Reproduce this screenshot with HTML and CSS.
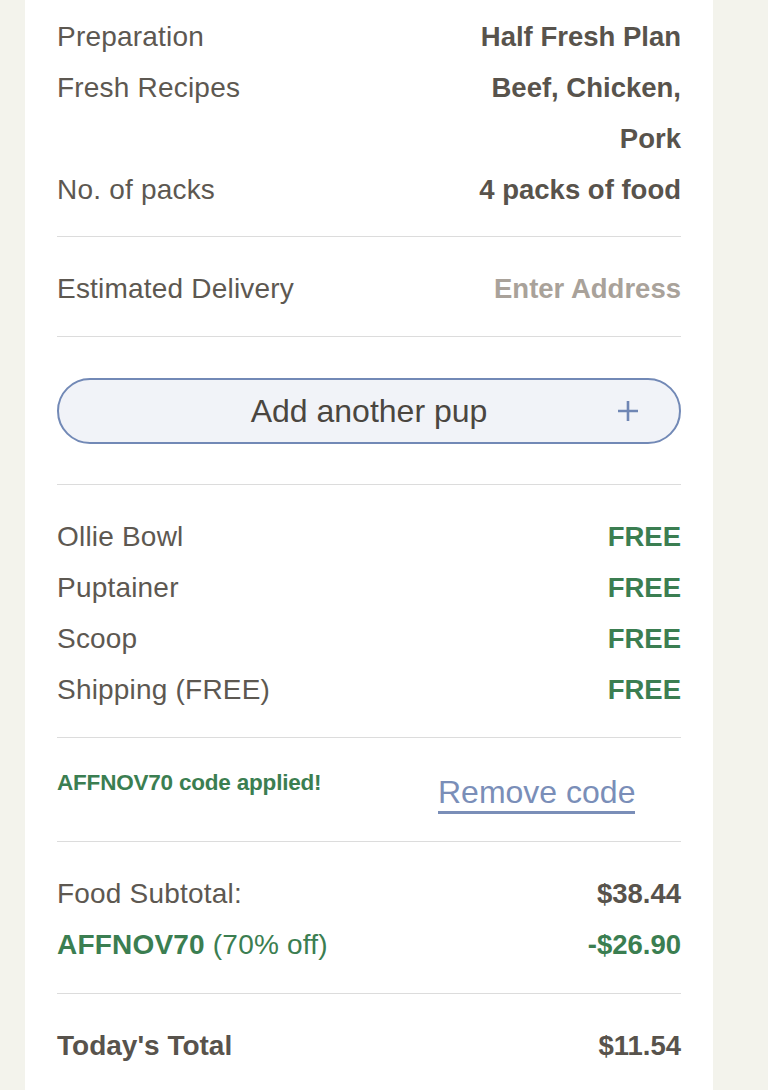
FILE: index.html
```html
<!DOCTYPE html>
<html lang="en">
<head>
<meta charset="utf-8">
<title>Order summary</title>
<link rel="stylesheet" href="styles.css">
</head>
<body>
<main class="card">
  <section class="section first">
    <div class="row"><span class="label">Preparation</span><span class="value">Half Fresh Plan</span></div>
    <div class="row"><span class="label">Fresh Recipes</span><span class="value">Beef, Chicken, Pork</span></div>
    <div class="row"><span class="label">No. of packs</span><span class="value">4 packs of food</span></div>
  </section>
  <section class="section">
    <div class="row"><span class="label">Estimated Delivery</span><span class="value muted">Enter Address</span></div>
  </section>
  <section class="section btn-section">
    <button class="add-pup" type="button">
      <span class="add-text">Add another pup</span>
      <svg class="plus" width="22" height="22" viewBox="0 0 22 22" aria-hidden="true"><path d="M11 1v20M1 11h20" stroke="#6f86b4" stroke-width="2.6" fill="none"/></svg>
    </button>
  </section>
  <section class="section">
    <div class="row"><span class="label">Ollie Bowl</span><span class="value green">FREE</span></div>
    <div class="row"><span class="label">Puptainer</span><span class="value green">FREE</span></div>
    <div class="row"><span class="label">Scoop</span><span class="value green">FREE</span></div>
    <div class="row"><span class="label">Shipping (FREE)</span><span class="value green">FREE</span></div>
  </section>
  <section class="section promo">
    <span class="applied">AFFNOV70 code applied!</span>
    <a class="remove" href="#">Remove code</a>
  </section>
  <section class="section totals">
    <div class="row"><span class="label">Food Subtotal:</span><span class="value">$38.44</span></div>
    <div class="row"><span class="label green"><b>AFFNOV70</b> (70% off)</span><span class="value green">-$26.90</span></div>
  </section>
  <section class="section last">
    <div class="row"><span class="label strong">Today's Total</span><span class="value">$11.54</span></div>
  </section>
</main>
</body>
</html>
```
FILE: styles.css
```css
html, body {
  margin: 0;
  padding: 0;
  background: #f3f3ec;
}
body {
  font-family: "Liberation Sans", Arial, sans-serif;
  color: #5d5851;
}
.card {
  margin-left: 25px;
  width: 688px;
  min-height: 1090px;
  background: #ffffff;
  padding: 11px 32px 0;
  box-sizing: border-box;
}
.section {
  padding: 26px 0 22px;
  border-bottom: 1px solid #dcdcdc;
}
.section.first {
  padding-top: 0;
  padding-bottom: 21px;
}
.section.totals {
  padding-bottom: 23px;
}
.section.last {
  border-bottom: none;
}
.row {
  display: flex;
  justify-content: space-between;
  align-items: flex-start;
  font-size: 28px;
  line-height: 51px;
}
.label {
  font-weight: 400;
  color: #5d5851;
  letter-spacing: 0.2px;
}
.label b {
  font-weight: 700;
}
.label.strong {
  font-weight: 700;
  color: #58534c;
  letter-spacing: 0;
}
.value {
  font-weight: 700;
  font-size: 27.5px;
  color: #58534c;
  text-align: right;
  max-width: 215px;
}
.value.muted {
  color: #a9a29a;
}
.green,
.value.green,
.label.green {
  color: #3b7e51;
}
.btn-section {
  padding-top: 41px;
  padding-bottom: 40px;
}
.add-pup {
  display: grid;
  grid-template-columns: 1fr auto 1fr;
  align-items: center;
  width: 100%;
  height: 66px;
  margin: 0;
  padding: 0 40px 0 0;
  border: 2px solid #7289b6;
  border-radius: 33px;
  background: #f1f3f8;
  font-family: "Liberation Sans", Arial, sans-serif;
  font-size: 32px;
  color: #4a4640;
  box-sizing: border-box;
  cursor: pointer;
}
.add-text {
  grid-column: 2;
  margin-left: 40px;
}
.plus {
  grid-column: 3;
  justify-self: end;
}
.promo {
  display: flex;
  align-items: flex-start;
  padding-bottom: 27px;
}
.applied {
  font-size: 22.5px;
  font-weight: 700;
  line-height: 38px;
  letter-spacing: -0.2px;
  color: #3b7e51;
  width: 381px;
}
.remove {
  display: inline-block;
  margin-top: 9px;
  font-size: 32px;
  line-height: 38px;
  color: #7a8eb8;
  text-decoration: none;
  border-bottom: 3px solid #7a8eb8;
}
```
